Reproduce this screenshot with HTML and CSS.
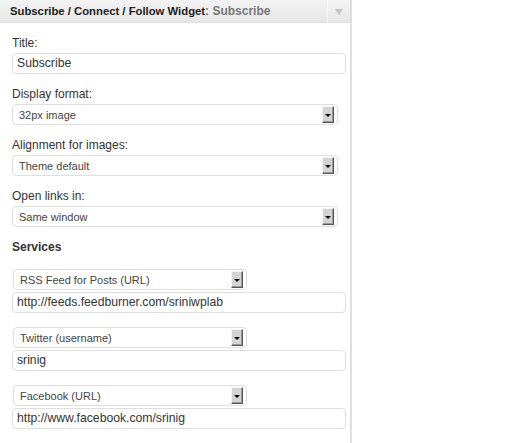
FILE: index.html
```html
<!DOCTYPE html>
<html>
<head>
<meta charset="utf-8">
<link rel="stylesheet" href="styles.css">
</head>
<body>
<div class="sidebar">
  <div class="widget">
    <div class="widget-top">
      <div class="widget-title"><span class="name">Subscribe / Connect / Follow Widget</span><span class="in-title">: Subscribe</span></div>
      <div class="widget-action"><span class="tri"></span></div>
    </div>
    <div class="widget-inside">
      <div class="field">
        <div class="label">Title:</div>
        <div class="input">Subscribe</div>
      </div>
      <div class="field">
        <div class="label">Display format:</div>
        <div class="select"><span>32px image</span><span class="btn"><span class="btri"></span></span></div>
      </div>
      <div class="field">
        <div class="label">Alignment for images:</div>
        <div class="select"><span>Theme default</span><span class="btn"><span class="btri"></span></span></div>
      </div>
      <div class="field">
        <div class="label">Open links in:</div>
        <div class="select"><span>Same window</span><span class="btn"><span class="btri"></span></span></div>
      </div>
      <div class="services-title">Services</div>
      <div class="service">
        <div class="select small"><span>RSS Feed for Posts (URL)</span><span class="btn"><span class="btri"></span></span></div>
        <div class="input">http://feeds.feedburner.com/sriniwplab</div>
      </div>
      <div class="service">
        <div class="select small"><span>Twitter (username)</span><span class="btn"><span class="btri"></span></span></div>
        <div class="input">srinig</div>
      </div>
      <div class="service">
        <div class="select small"><span>Facebook (URL)</span><span class="btn"><span class="btri"></span></span></div>
        <div class="input">http://www.facebook.com/srinig</div>
      </div>
    </div>
  </div>
</div>
</body>
</html>
```
FILE: styles.css
```css
html, body {
  margin: 0;
  padding: 0;
  background: #fff;
  height: 100%;
}
body {
  font-family: "Liberation Sans", Arial, sans-serif;
  color: #333;
}
.sidebar {
  width: 351px;
  height: 100%;
  border-right: 1px solid #e0e0e0;
}
.widget {
  width: 350px;
  height: 100%;
  border-right: 1px solid #dcdcdc;
}
.widget-top {
  display: flex;
  height: 22px;
  border-bottom: 1px solid #dfdfdf;
  background: linear-gradient(#f3f3f3, #e6e6e6);
}
.widget-title {
  flex: 1;
  padding-left: 10px;
  line-height: 22px;
  font-size: 11.3px;
  font-weight: bold;
  color: #222;
  white-space: nowrap;
  overflow: hidden;
}
.in-title {
  font-size: 12px;
  color: #777;
}
.name {
  color: #222;
}
.widget-action {
  width: 22px;
  border-left: 1px solid #fafafa;
  display: flex;
  align-items: center;
  justify-content: center;
}
.tri {
  width: 0;
  height: 0;
  border-left: 4px solid transparent;
  border-right: 4px solid transparent;
  border-top: 6px solid #c4c4c4;
  margin-top: 2px;
}
.widget-inside {
  padding: 13px 4px 0 12px;
}
.field {
  margin-bottom: 13px;
}
.label {
  font-size: 12px;
  line-height: 15px;
  color: #333;
  margin-bottom: 2px;
}
.input {
  height: 19px;
  border: 1px solid #dfdfdf;
  border-radius: 4px;
  padding-left: 4px;
  font-size: 12.2px;
  line-height: 19px;
  color: #333;
  background: #fff;
}
.select {
  width: 318px;
  height: 19px;
  border: 1px solid #dfdfdf;
  border-radius: 4px;
  padding-left: 6px;
  box-sizing: content-box;
  display: flex;
  align-items: center;
  justify-content: space-between;
  font-size: 11px;
  color: #444;
  background: #fff;
}
.select.small {
  width: 226px;
  margin-left: 1px;
}
.btn {
  width: 10px;
  height: 15px;
  margin-right: 3px;
  background: #d4d4d4;
  border-top: 1px solid #f4f4f4;
  border-left: 1px solid #f4f4f4;
  border-right: 1px solid #555;
  border-bottom: 1px solid #555;
  box-shadow: inset -1px -1px 0 #999;
  display: flex;
  align-items: center;
  justify-content: center;
}
.btri {
  width: 0;
  height: 0;
  border-left: 3px solid transparent;
  border-right: 3px solid transparent;
  border-top: 3px solid #000;
  margin-top: 1px;
}
.services-title {
  font-size: 12px;
  font-weight: bold;
  line-height: 15px;
  margin-bottom: 14px;
  color: #333;
}
.service {
  margin-bottom: 14px;
}
.service .select {
  margin-bottom: 2px;
}
```
